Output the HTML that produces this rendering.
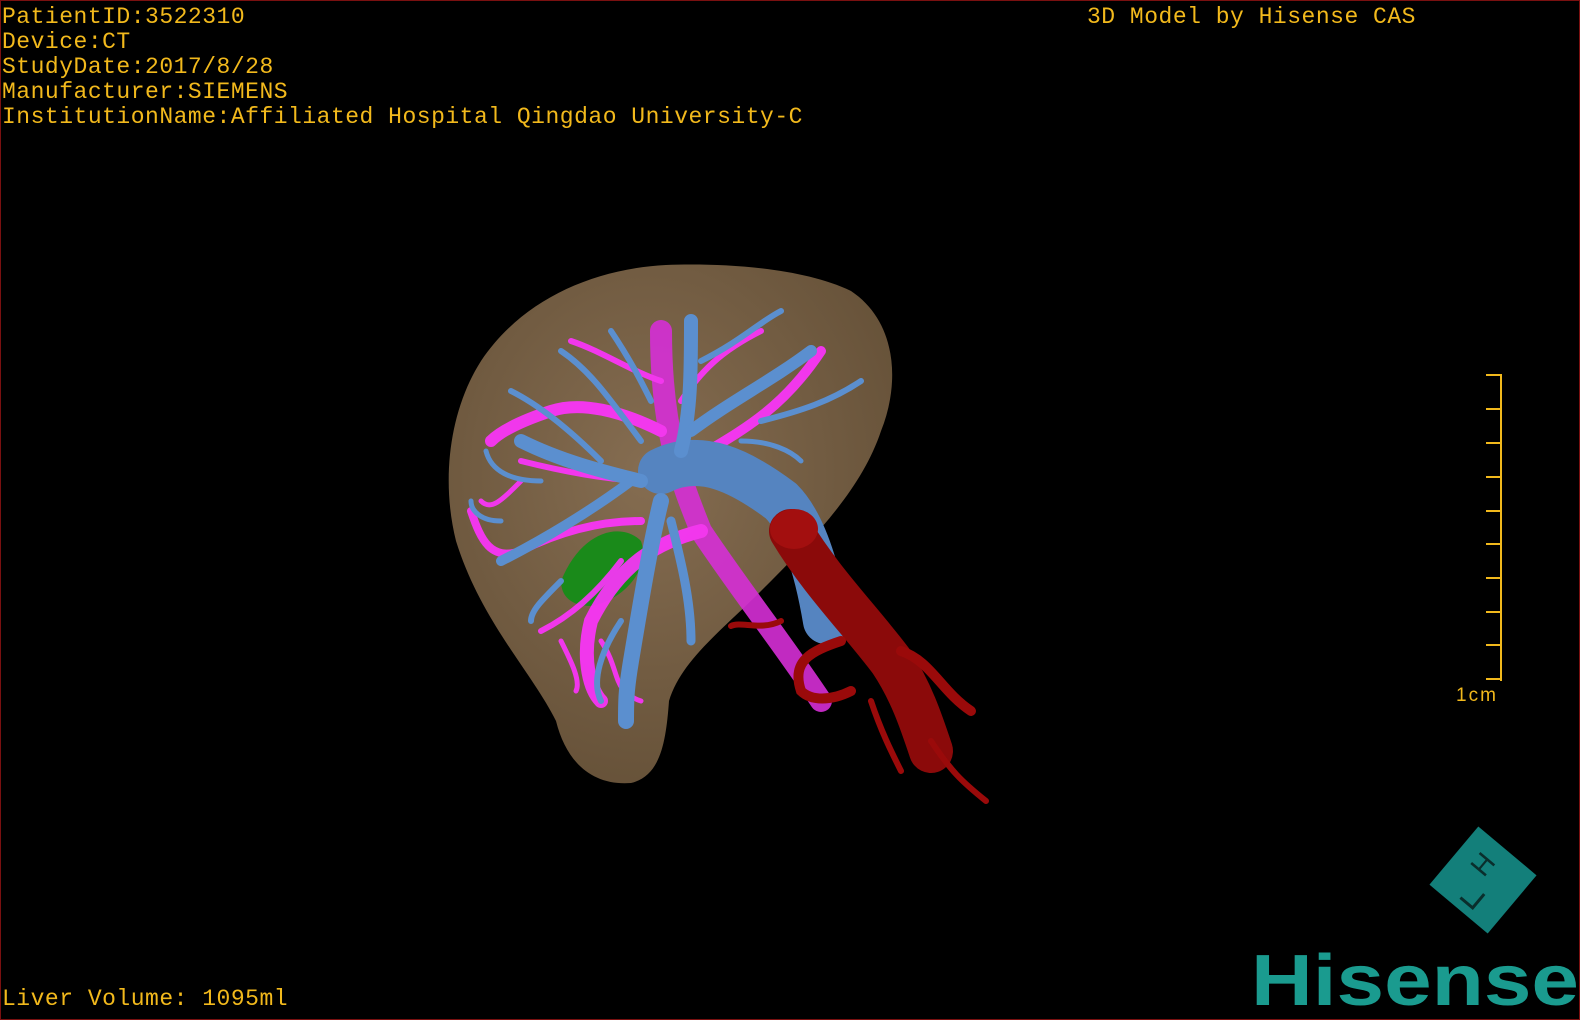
<!DOCTYPE html>
<html><head><meta charset="utf-8"><style>
html,body{margin:0;padding:0;background:#000;}
#c{position:relative;width:1580px;height:1020px;background:#000;overflow:hidden;box-sizing:border-box;border:1px solid #7a1010;}
.t{position:absolute;left:1px;color:#f2b91c;font-family:"Liberation Mono",monospace;font-size:23px;line-height:25px;white-space:pre;letter-spacing:0.5px;}
</style></head><body><div id="c">
<div class="t" style="top:4px">PatientID:3522310
Device:CT
StudyDate:2017/8/28
Manufacturer:SIEMENS
InstitutionName:Affiliated Hospital Qingdao University-C</div>
<div class="t" style="left:1086px;top:4px">3D Model by Hisense CAS</div>
<div class="t" style="top:986px">Liver Volume: 1095ml</div>
<svg width="1580" height="1020" style="position:absolute;left:0;top:0">
<defs><radialGradient id="lv" cx="0.45" cy="0.4" r="0.6"><stop offset="0" stop-color="#94795a"/><stop offset="1" stop-color="#735c40"/></radialGradient></defs>
<path d="M665 264 C720 262 800 266 850 290 C895 320 900 380 880 430 C860 490 810 540 760 590 C720 630 680 660 668 700 C665 740 660 775 630 782 C590 785 565 760 555 720 C530 670 480 620 455 540 C440 480 448 410 480 360 C520 300 590 268 665 264 Z" fill="url(#lv)" opacity="0.9"/>
<path d="M560 580 C580 530 620 520 640 540 C650 570 620 600 590 605 C570 605 560 595 560 580Z" fill="#1a8a1a"/>
<g stroke="#ff33ff" stroke-linecap="round" fill="none" opacity="0.9">
<path d="M820 700 C780 640 740 590 700 530 C680 480 660 430 660 330" stroke-width="22" stroke="#d62fd6"/>
<path d="M700 530 C660 540 620 560 590 620 C580 660 590 690 600 700" stroke-width="14"/>
<path d="M660 430 C620 410 580 400 550 410 C520 420 500 430 490 440" stroke-width="12"/>
<path d="M690 460 C740 430 780 410 820 350" stroke-width="10"/>
<path d="M640 520 C600 520 560 530 520 550 C490 560 480 540 470 510" stroke-width="8"/>
<path d="M660 380 C630 370 600 350 570 340 M680 400 C700 370 720 350 760 330 M620 560 C590 600 560 620 540 630 M650 480 C610 480 560 470 520 460" stroke-width="6"/>
<path d="M600 640 C620 670 610 690 640 700 M560 640 C570 660 580 680 575 690 M520 480 C500 500 490 510 480 500" stroke-width="5"/>
</g>
<g stroke="#5b8fcf" stroke-linecap="round" fill="none">
<path d="M660 470 C700 450 740 470 780 500 C800 520 815 560 825 620" stroke-width="46" stroke="#5584c0"/>
<path d="M640 480 C600 470 560 460 520 440" stroke-width="14"/>
<path d="M680 450 C690 410 690 370 690 320" stroke-width="14"/>
<path d="M690 430 C730 400 770 380 810 350" stroke-width="12"/>
<path d="M660 500 C650 540 640 600 630 660 C625 690 625 700 625 720" stroke-width="16"/>
<path d="M630 480 C590 510 540 540 500 560" stroke-width="10"/>
<path d="M670 520 C680 560 690 600 690 640" stroke-width="9"/>
<path d="M640 440 C610 400 590 370 560 350 M600 460 C560 420 530 400 510 390 M700 360 C740 340 760 320 780 310 M610 330 C630 360 640 380 650 400 M560 580 C540 600 530 610 530 620 M620 620 C600 650 590 680 600 700 M760 420 C800 410 830 400 860 380" stroke-width="6"/>
<path d="M540 480 C510 480 490 470 485 450 M500 520 C480 520 470 510 470 500 M740 440 C770 440 790 450 800 460" stroke-width="5"/>
</g>
<g stroke="#9a0a0a" stroke-linecap="round" fill="none">
<path d="M790 530 C820 580 860 620 890 660 C910 690 920 720 930 750" stroke-width="44" stroke="#8b0a0a"/>
<path d="M840 640 C810 650 790 660 800 690 C810 700 830 700 850 690" stroke-width="10"/>
<path d="M900 650 C930 660 940 690 970 710" stroke-width="10"/>
<path d="M870 700 C880 730 890 750 900 770 M930 740 C950 770 960 780 985 800" stroke-width="6"/>
<path d="M780 620 C760 630 740 620 730 625" stroke-width="6"/>
</g>
<ellipse cx="793" cy="528" rx="24" ry="20" fill="#a30f0f"/>
<g stroke="#f2b91c" stroke-width="2" fill="none">
<path d="M1500 373 V680"/>
<path d="M1485 374 H1500 M1485 408 H1500 M1485 442 H1500 M1485 476 H1500 M1485 510 H1500 M1485 543 H1500 M1485 577 H1500 M1485 611 H1500 M1485 644 H1500 M1485 678 H1500"/>
</g>
<text x="1455" y="700" fill="#f2b91c" font-family="Liberation Sans,sans-serif" font-size="19" letter-spacing="2">1cm</text>
<g transform="translate(1482 879) rotate(40)">
<rect x="-38" y="-38" width="76" height="76" fill="#137f7a"/>
<text x="-18" y="-4" font-family="Liberation Sans,sans-serif" font-size="28" fill="#0a2e2c" transform="rotate(90 -10 -14)">H</text>
<path d="M10 10 V28 H-6" stroke="#0a2e2c" stroke-width="3" fill="none"/>
</g>
<text x="1250" y="1004" fill="#1a9b8f" font-family="Liberation Sans,sans-serif" font-weight="bold" font-size="72" textLength="328" lengthAdjust="spacingAndGlyphs">Hisense</text>
</svg>
</div></body></html>
